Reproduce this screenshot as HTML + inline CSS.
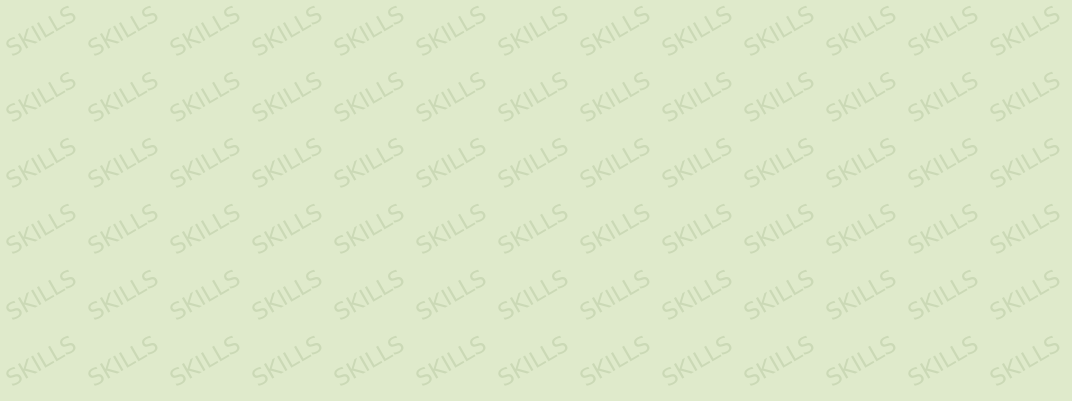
<!DOCTYPE html>
<html><head><style>
html,body{margin:0;padding:0;background:#dfeacb;width:1072px;height:401px;overflow:hidden}
</style></head><body>
<svg width="1072" height="401" xmlns="http://www.w3.org/2000/svg">
<defs>
<pattern id="p" x="0" y="0" width="82" height="66" patternUnits="userSpaceOnUse">
<text x="41" y="39" transform="rotate(-30 41 31)" text-anchor="middle" font-family="DejaVu Sans, Liberation Sans, sans-serif" font-size="23" fill="#cbd9b6">SKILLS</text>
</pattern>
</defs>
<rect width="1072" height="401" fill="#dfeacb"/>
<rect width="1072" height="401" fill="url(#p)"/>
</svg>
</body></html>
